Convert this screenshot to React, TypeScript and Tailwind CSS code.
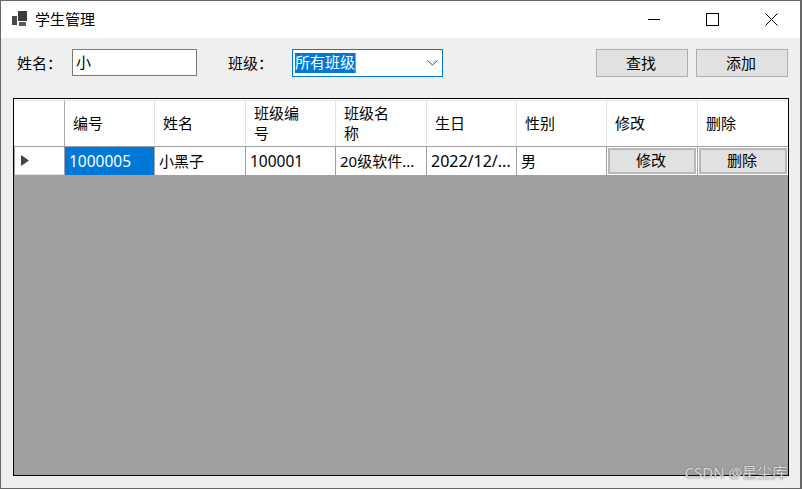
import React from 'react'

const cjk = "font-['Noto_Sans','Noto_Sans_CJK_SC',sans-serif]"

const columns = [
    { title: '编号', width: 'w-[90px]', pad: 'pl-[8px]' },
    { title: '姓名', width: 'w-[91px]', pad: 'pl-[8px]' },
    { title: '班级编\n号', width: 'w-[90px]', pad: 'pl-[8px]' },
    { title: '班级名\n称', width: 'w-[91px]', pad: 'pl-[8px]' },
    { title: '生日', width: 'w-[90px]', pad: 'pl-[8px]' },
    { title: '性别', width: 'w-[90px]', pad: 'pl-[8px]' },
    { title: '修改', width: 'w-[91px]', pad: 'pl-[8px]' },
    { title: '删除', width: 'w-[90px]', pad: 'pl-[8px]' },
]

const cells = [
    { text: '1000005', width: 'w-[90px]', extra: 'bg-[#0078d7] text-[15.5px] text-white' },
    { text: '小黑子', width: 'w-[91px]', extra: 'bg-white' },
    { text: '100001', width: 'w-[90px]', extra: 'bg-white text-[15.5px]' },
    { text: '20级软件...', width: 'w-[91px]', extra: 'bg-white' },
    { text: '2022/12/...', width: 'w-[90px]', extra: 'bg-white text-[16px]' },
    { text: '男', width: 'w-[90px]', extra: 'bg-white' },
]

const WindowIcon = () => (
    <svg width="16" height="16" viewBox="0 0 16 16" className="shrink-0">
        <rect x="0" y="5" width="5" height="9" fill="#4a4a4a" />
        <rect x="6" y="0" width="9" height="10" fill="#3c3c3c" />
        <rect x="7" y="11" width="7" height="4" fill="#5a5a5a" />
    </svg>
)

const Controls = () => (
    <div className="flex items-center">
        <svg width="12" height="12" viewBox="0 0 12 12" className="ml-[647px]">
            <path d="M0 5.5H12" stroke="#000" />
        </svg>
        <svg width="13" height="13" viewBox="0 0 13 13" className="ml-[46px]">
            <rect x="0.5" y="0.5" width="12" height="12" fill="none" stroke="#000" />
        </svg>
        <svg width="13" height="13" viewBox="0 0 13 13" className="ml-[46px]">
            <path d="M0.5 0.5L12.5 12.5M12.5 0.5L0.5 12.5" stroke="#000" />
        </svg>
    </div>
)

const ToolButton = ({ label }: { label: string }) => (
    <button className="h-[28px] w-[92px] border border-[#adadad] bg-[#e1e1e1] pr-[2px] text-[15px] leading-none text-black">
        {label}
    </button>
)

const GridButton = ({ label, width }: { label: string; width: string }) => (
    <div className={`${width} h-full border-r border-[#a0a0a0] bg-white p-[1px] last:border-r-0`}>
        <button className="h-full w-full border-2 border-[#b8b8b8] bg-[#e1e1e1] pb-[1px] pr-[2px] text-[15px] leading-none text-black">
            {label}
        </button>
    </div>
)

export default function App() {
    return (
        <div className={`${cjk} relative flex h-[489px] w-[802px] flex-col overflow-hidden border border-r-2 border-[#666] bg-[#efefef] text-black`}>
            <div className="relative flex h-[37px] shrink-0 items-center bg-white">
                <div className="absolute left-[11px] top-[10px]"><WindowIcon /></div>
                <span className="absolute left-[34px] top-[7px] text-[15px] leading-[22px]">学生管理</span>
                <Controls />
            </div>

            <div className="flex h-[60px] shrink-0 items-start pt-[11px] text-[15px]">
                <span className="ml-[16px] mt-[3px] w-[55px] leading-[22px]">姓名：</span>
                <div className="h-[27px] w-[125px] border border-[#7a7a7a] bg-white pl-[3px] leading-[25px]">小</div>
                <span className="ml-[31px] mt-[3px] w-[64px] leading-[22px]">班级：</span>
                <div className="flex h-[28px] w-[151px] items-center border border-[#0078d7] bg-white pl-[2px]">
                    <span className="h-[20px] border-r border-[#e8833a] bg-[#0078d7] leading-[19px] text-white">所有班级</span>
                    <svg width="11" height="6" viewBox="0 0 11 6" className="ml-[71px]">
                        <path d="M0.5 0.5L5.5 5L10.5 0.5" fill="none" stroke="#444" />
                    </svg>
                </div>
                <div className="ml-[153px] flex gap-[8px]">
                    <ToolButton label="查找" />
                    <ToolButton label="添加" />
                </div>
            </div>

            <div className="mx-[12px] flex h-[378px] w-[776px] flex-col border border-black bg-[#a0a0a0] text-[15px]">
                <div className="flex h-[48px] shrink-0 border-b border-[#a0a0a0] bg-white pl-[1px] pt-[1px]">
                    <div className="h-full w-[50px] border-r border-t border-r-[#a8a8a8] border-t-[#e3e3e3]" />
                    {columns.map((col) => (
                        <div key={col.title} className={`${col.width} ${col.pad} flex h-full items-center whitespace-pre-line border-r border-t border-[#e3e3e3] pb-[2px] leading-[20px] last:border-r-0`}>
                            {col.title}
                        </div>
                    ))}
                </div>
                <div className="flex h-[28px] shrink-0 pl-[1px]">
                    <div className="flex h-full w-[50px] items-center border-b border-r border-b-[#e3e3e3] border-r-[#a0a0a0] bg-white pl-[6px]">
                        <svg width="8" height="11" viewBox="0 0 8 11">
                            <path d="M0 0L8 5.5L0 11Z" fill="#444" />
                        </svg>
                    </div>
                    {cells.map((cell) => (
                        <div key={cell.text} className={`${cell.width} ${cell.extra} h-full border-r border-[#a0a0a0] pl-[4px] leading-[28px]`}>
                            {cell.text}
                        </div>
                    ))}
                    <GridButton label="修改" width="w-[91px]" />
                    <GridButton label="删除" width="w-[90px]" />
                </div>
            </div>

            <span className="absolute bottom-[6px] right-[13px] text-[15px] leading-[20px] text-[#d8d8d8] [text-shadow:0_0_2px_#666]">CSDN @星尘库</span>
        </div>
    )
}
